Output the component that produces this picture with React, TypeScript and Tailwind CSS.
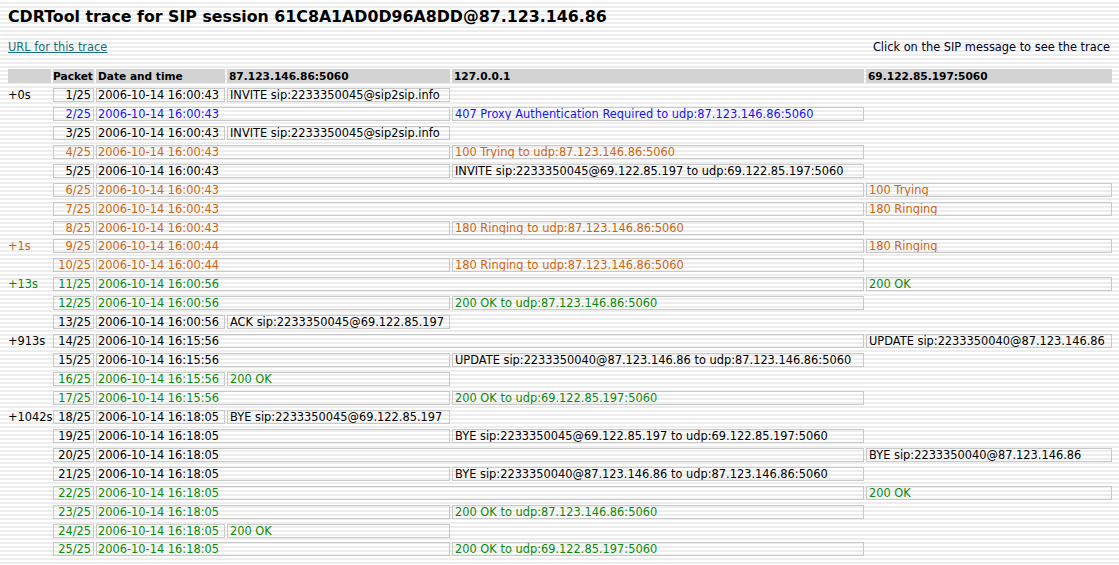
import React from 'react';

type Tone = 'black' | 'blue' | 'orange' | 'green';

interface Packet {
    offset?: string,
    offsetTone?: Tone,
    tone: Tone,
    time: string,
    col: 3 | 4 | 5,
    msg: string,
}

const toneClass: Record<Tone, string> = {
    black: 'text-black',
    blue: 'text-[#1414f5]',
    orange: 'text-[#cc6611]',
    green: 'text-[#0a8a0a]',
};

// date cell stretches up to the column that holds the message
const dateSpan: Record<number, string> = {
    3: 'col-span-1',
    4: 'col-span-2',
    5: 'col-span-3',
};

const msgStart: Record<number, string> = {
    3: 'col-start-4',
    4: 'col-start-5',
    5: 'col-start-6',
};

const packets: Packet[] = [
    {offset: '+0s', tone: 'black', time: '16:00:43', col: 3, msg: 'INVITE sip:2233350045@sip2sip.info'},
    {tone: 'blue', time: '16:00:43', col: 4, msg: '407 Proxy Authentication Required to udp:87.123.146.86:5060'},
    {tone: 'black', time: '16:00:43', col: 3, msg: 'INVITE sip:2233350045@sip2sip.info'},
    {tone: 'orange', time: '16:00:43', col: 4, msg: '100 Trying to udp:87.123.146.86:5060'},
    {tone: 'black', time: '16:00:43', col: 4, msg: 'INVITE sip:2233350045@69.122.85.197 to udp:69.122.85.197:5060'},
    {tone: 'orange', time: '16:00:43', col: 5, msg: '100 Trying'},
    {tone: 'orange', time: '16:00:43', col: 5, msg: '180 Ringing'},
    {tone: 'orange', time: '16:00:43', col: 4, msg: '180 Ringing to udp:87.123.146.86:5060'},
    {offset: '+1s', offsetTone: 'orange', tone: 'orange', time: '16:00:44', col: 5, msg: '180 Ringing'},
    {tone: 'orange', time: '16:00:44', col: 4, msg: '180 Ringing to udp:87.123.146.86:5060'},
    {offset: '+13s', offsetTone: 'green', tone: 'green', time: '16:00:56', col: 5, msg: '200 OK'},
    {tone: 'green', time: '16:00:56', col: 4, msg: '200 OK to udp:87.123.146.86:5060'},
    {tone: 'black', time: '16:00:56', col: 3, msg: 'ACK sip:2233350045@69.122.85.197'},
    {offset: '+913s', tone: 'black', time: '16:15:56', col: 5, msg: 'UPDATE sip:2233350040@87.123.146.86'},
    {tone: 'black', time: '16:15:56', col: 4, msg: 'UPDATE sip:2233350040@87.123.146.86 to udp:87.123.146.86:5060'},
    {tone: 'green', time: '16:15:56', col: 3, msg: '200 OK'},
    {tone: 'green', time: '16:15:56', col: 4, msg: '200 OK to udp:69.122.85.197:5060'},
    {offset: '+1042s', tone: 'black', time: '16:18:05', col: 3, msg: 'BYE sip:2233350045@69.122.85.197'},
    {tone: 'black', time: '16:18:05', col: 4, msg: 'BYE sip:2233350045@69.122.85.197 to udp:69.122.85.197:5060'},
    {tone: 'black', time: '16:18:05', col: 5, msg: 'BYE sip:2233350040@87.123.146.86'},
    {tone: 'black', time: '16:18:05', col: 4, msg: 'BYE sip:2233350040@87.123.146.86 to udp:87.123.146.86:5060'},
    {tone: 'green', time: '16:18:05', col: 5, msg: '200 OK'},
    {tone: 'green', time: '16:18:05', col: 4, msg: '200 OK to udp:87.123.146.86:5060'},
    {tone: 'green', time: '16:18:05', col: 3, msg: '200 OK'},
    {tone: 'green', time: '16:18:05', col: 4, msg: '200 OK to udp:69.122.85.197:5060'},
];

const cell = 'h-[14px] border border-[#c9c9c9] leading-[12px] whitespace-nowrap overflow-hidden';
const head = 'h-[14px] bg-[#d3d3d3] text-[10.6px] font-bold leading-[14px] whitespace-nowrap px-[2px]';

export default function App() {
    return (
        <div className="min-h-[565px] w-full px-[8px] pt-[6px] text-[11.4px] text-black bg-[repeating-linear-gradient(180deg,#ffffff_0px,#ffffff_2px,#ededed_2px,#ededed_4px)]"
             style={{fontFamily: '"DejaVu Sans", Verdana, sans-serif'}}>
            <h1 className="text-[15.8px] font-bold leading-[22px]">
                CDRTool trace for SIP session 61C8A1AD0D96A8DD@87.123.146.86
            </h1>

            <div className="flex justify-between items-end mt-[13px] h-[13px] leading-[13px]">
                <a href="#" className="text-[#17707a] underline">URL for this trace</a>
                <span className="text-[#000022] pr-[1px]">Click on the SIP message to see the trace</span>
            </div>

            <div className="grid grid-cols-[43px_41px_129px_223px_412px_246px] gap-x-[2px] gap-y-[4.94px] mt-[15px] w-max">
                <div className={head}></div>
                <div className={head + ' !px-0'}>Packet</div>
                <div className={head}>Date and time</div>
                <div className={head}>87.123.146.86:5060</div>
                <div className={head}>127.0.0.1</div>
                <div className={head}>69.122.85.197:5060</div>

                {packets.map((p, i) => (
                    <React.Fragment key={i}>
                        <div className={'col-start-1 h-[14px] leading-[14px] whitespace-nowrap ' + toneClass[p.offsetTone ?? p.tone]}>
                            {p.offset ?? ''}
                        </div>
                        <div className={cell + ' text-right pr-[2px] ' + toneClass[p.tone]}>
                            {i + 1}/25
                        </div>
                        <div className={cell + ' pl-[1px] ' + dateSpan[p.col] + ' ' + toneClass[p.tone]}>
                            2006-10-14 {p.time}
                        </div>
                        <div className={cell + ' pl-[2px] cursor-pointer ' + msgStart[p.col] + ' ' + toneClass[p.tone]}>
                            {p.msg}
                        </div>
                    </React.Fragment>
                ))}
            </div>
        </div>
    );
}
